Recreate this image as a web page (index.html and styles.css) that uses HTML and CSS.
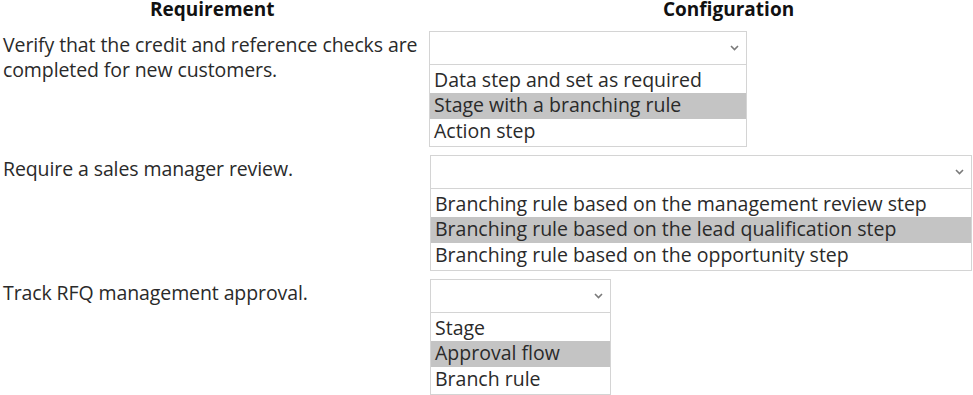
FILE: index.html
```html
<!DOCTYPE html>
<html lang="en">
<head>
<meta charset="utf-8">
<title>Requirement / Configuration</title>
<link rel="stylesheet" href="styles.css">
</head>
<body>
<div class="table">
  <div class="head head-req">Requirement</div>
  <div class="head head-conf">Configuration</div>

  <div class="req">Verify that the credit and reference checks are<br>completed for new customers.</div>
  <div class="conf">
    <div class="dd dd-1">
      <div class="select"><svg class="chev" width="9" height="6" viewBox="0 0 9 6"><path d="M1 1l3.5 3.5L8 1" fill="none" stroke="#7a7a7a" stroke-width="1.6"/></svg></div>
      <ul class="list">
        <li>Data step and set as required</li>
        <li class="sel">Stage with a branching rule</li>
        <li>Action step</li>
      </ul>
    </div>
  </div>

  <div class="req">Require a sales manager review.</div>
  <div class="conf">
    <div class="dd dd-2">
      <div class="select"><svg class="chev" width="9" height="6" viewBox="0 0 9 6"><path d="M1 1l3.5 3.5L8 1" fill="none" stroke="#7a7a7a" stroke-width="1.6"/></svg></div>
      <ul class="list">
        <li>Branching rule based on the management review step</li>
        <li class="sel">Branching rule based on the lead qualification step</li>
        <li>Branching rule based on the opportunity step</li>
      </ul>
    </div>
  </div>

  <div class="req">Track RFQ management approval.</div>
  <div class="conf">
    <div class="dd dd-3">
      <div class="select"><svg class="chev" width="9" height="6" viewBox="0 0 9 6"><path d="M1 1l3.5 3.5L8 1" fill="none" stroke="#7a7a7a" stroke-width="1.6"/></svg></div>
      <ul class="list">
        <li>Stage</li>
        <li class="sel">Approval flow</li>
        <li>Branch rule</li>
      </ul>
    </div>
  </div>
</div>
</body>
</html>
```

FILE: styles.css
```css
html, body {
  margin: 0;
  padding: 0;
  background: #ffffff;
}

body {
  font-family: "Open Sans", "Noto Sans", sans-serif;
  font-size: 19.5px;
  color: #2a2a2a;
}

.table {
  display: grid;
  grid-template-columns: 430px 1fr;
  grid-template-rows: 31px 124px 124px 124px;
}

.head {
  font-weight: 700;
  font-size: 19px;
  color: #111;
  line-height: 22px;
  margin-top: -2px;
}

.head-req {
  padding-left: 150px;
}

.head-conf {
  padding-left: 233px;
}

.req {
  padding-left: 3px;
  padding-top: 2px;
  line-height: 24.5px;
  letter-spacing: -0.1px;
}

.dd {
  display: flex;
  flex-direction: column;
}

.dd-1 { width: 318px; margin-left: -1px; }
.dd-2 { width: 542px; }
.dd-3 { width: 181px; }

.select {
  height: 34px;
  border: 1px solid #d4d4d4;
  box-sizing: border-box;
  display: flex;
  align-items: center;
  justify-content: flex-end;
  padding-right: 7px;
}

.chev {
  display: block;
}

.list {
  list-style: none;
  margin: 0;
  padding: 0 0 1px 0;
  border: 1px solid #d4d4d4;
  border-top: none;
}

.list li {
  line-height: 24px;
  padding: 0 0 2px 4px;
  white-space: nowrap;
}

.list li:first-child {
  padding-top: 3px;
  padding-bottom: 1px;
}

.list li.sel {
  background: #c4c4c4;
}
```
